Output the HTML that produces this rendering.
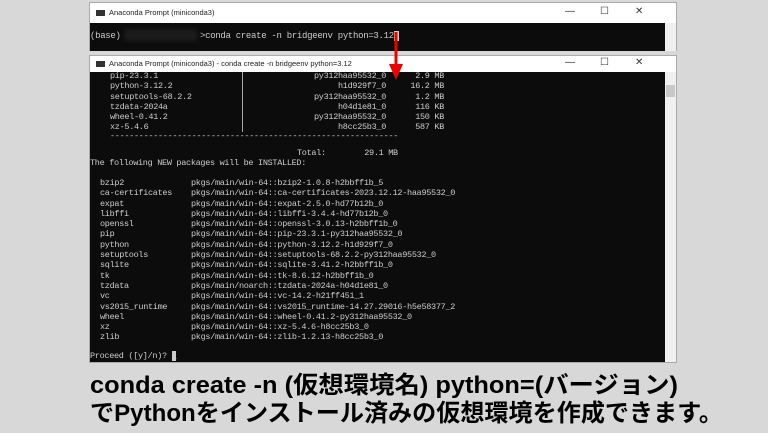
<!DOCTYPE html>
<html><head><meta charset="utf-8"><style>
body{margin:0;width:768px;height:433px;background:#d8d8d8;position:relative;overflow:hidden;font-family:"Liberation Sans",sans-serif}
.win{position:absolute;left:89px;width:588px;background:#fff;border:1px solid #aaa;box-sizing:border-box}
.title{position:absolute;left:0;top:0;right:0;background:#fff;font-size:7.5px;color:#222}
.title .ic{position:absolute;left:6px;width:9px;height:6px;background:#333}
.title .t{position:absolute;left:19px}
.ctl{position:absolute;font-size:10px;color:#333}
.con{position:absolute;left:0;right:11px;background:#0c0c0c}
.sb{position:absolute;right:0;width:11px;background:#f0f0f0}
.m{position:absolute;font-family:"Liberation Mono",monospace;font-size:8.5px;letter-spacing:-0.3px;color:#ccc;white-space:pre;line-height:10.3px}
</style></head><body>
<div class="win" style="top:2px;height:49px">
 <div class="title" style="height:20px"><div class="ic" style="top:7px"></div><div class="t" style="top:5px">Anaconda Prompt (miniconda3)</div>
 <div class="ctl" style="left:475px;top:3px">—</div><div class="ctl" style="left:510px;top:3px">☐</div><div class="ctl" style="left:545px;top:3px">✕</div></div>
 <div class="con" style="top:20px;height:28px"></div>
 <div class="sb" style="top:20px;height:28px"></div>
</div>
<div style="position:absolute;left:125px;top:29px;width:72px;height:12px;background:#1c1c1c;filter:blur(2px)"></div>
<div class="m" style="left:90px;top:31px;font-size:9px">(base)</div>
<div class="m" style="left:200px;top:31px;font-size:9px">&gt;conda create -n bridgeenv python=3.12<span style="background:#ccc">_</span></div>

<div class="win" style="top:55px;height:308px">
 <div class="title" style="height:16px"><div class="ic" style="top:5px"></div><div class="t" style="top:3px">Anaconda Prompt (miniconda3) - conda  create -n bridgeenv python=3.12</div>
 <div class="ctl" style="left:475px;top:1px">—</div><div class="ctl" style="left:510px;top:1px">☐</div><div class="ctl" style="left:545px;top:1px">✕</div></div>
 <div class="con" style="top:16px;height:290px"></div>
 <div class="sb" style="top:16px;height:290px"><div style="position:absolute;top:13px;left:1px;width:9px;height:12px;background:#c8c8c8"></div></div>
</div>
<div style="position:absolute;left:242px;top:72px;width:1px;height:60px;background:#aaa"></div>
<div class="m" style="left:110px;top:71px">pip-23.3.1
python-3.12.2
setuptools-68.2.2
tzdata-2024a
wheel-0.41.2
xz-5.4.6</div>
<div class="m" style="left:254px;top:71px;text-align:right;width:132px">py312haa95532_0
h1d929f7_0
py312haa95532_0
h04d1e81_0
py312haa95532_0
h8cc25b3_0</div>
<div class="m" style="left:388px;top:71px;text-align:right;width:56px">2.9 MB
16.2 MB
1.2 MB
116 KB
150 KB
587 KB</div>
<div class="m" style="left:110px;top:131px">------------------------------------------------------------</div>
<div class="m" style="left:297px;top:148px">Total:        29.1 MB</div>
<div class="m" style="left:90px;top:158px">The following NEW packages will be INSTALLED:</div>
<div class="m" style="left:100px;top:178px">bzip2
ca-certificates
expat
libffi
openssl
pip
python
setuptools
sqlite
tk
tzdata
vc
vs2015_runtime
wheel
xz
zlib</div>
<div class="m" style="left:191px;top:178px">pkgs/main/win-64::bzip2-1.0.8-h2bbff1b_5
pkgs/main/win-64::ca-certificates-2023.12.12-haa95532_0
pkgs/main/win-64::expat-2.5.0-hd77b12b_0
pkgs/main/win-64::libffi-3.4.4-hd77b12b_0
pkgs/main/win-64::openssl-3.0.13-h2bbff1b_0
pkgs/main/win-64::pip-23.3.1-py312haa95532_0
pkgs/main/win-64::python-3.12.2-h1d929f7_0
pkgs/main/win-64::setuptools-68.2.2-py312haa95532_0
pkgs/main/win-64::sqlite-3.41.2-h2bbff1b_0
pkgs/main/win-64::tk-8.6.12-h2bbff1b_0
pkgs/main/noarch::tzdata-2024a-h04d1e81_0
pkgs/main/win-64::vc-14.2-h21ff451_1
pkgs/main/win-64::vs2015_runtime-14.27.29016-h5e58377_2
pkgs/main/win-64::wheel-0.41.2-py312haa95532_0
pkgs/main/win-64::xz-5.4.6-h8cc25b3_0
pkgs/main/win-64::zlib-1.2.13-h8cc25b3_0</div>
<div class="m" style="left:90px;top:351px">Proceed ([y]/n)? <span style="background:#ccc">_</span></div>

<svg style="position:absolute;left:0;top:0" width="768" height="433">
 <line x1="396" y1="32" x2="396" y2="66" stroke="#e00" stroke-width="3"/>
 <polygon points="389,64 403,64 396,80" fill="#e00"/>
 <g font-family="'Liberation Sans','Noto Sans CJK JP',sans-serif" font-weight="bold" font-size="24" fill="#000">
  <text x="90" y="393" textLength="588" lengthAdjust="spacingAndGlyphs">conda create -n (仮想環境名) python=(バージョン)</text>
  <text x="90" y="421" textLength="633" lengthAdjust="spacingAndGlyphs">でPythonをインストール済みの仮想環境を作成できます。</text>
 </g>
</svg>
</body></html>
